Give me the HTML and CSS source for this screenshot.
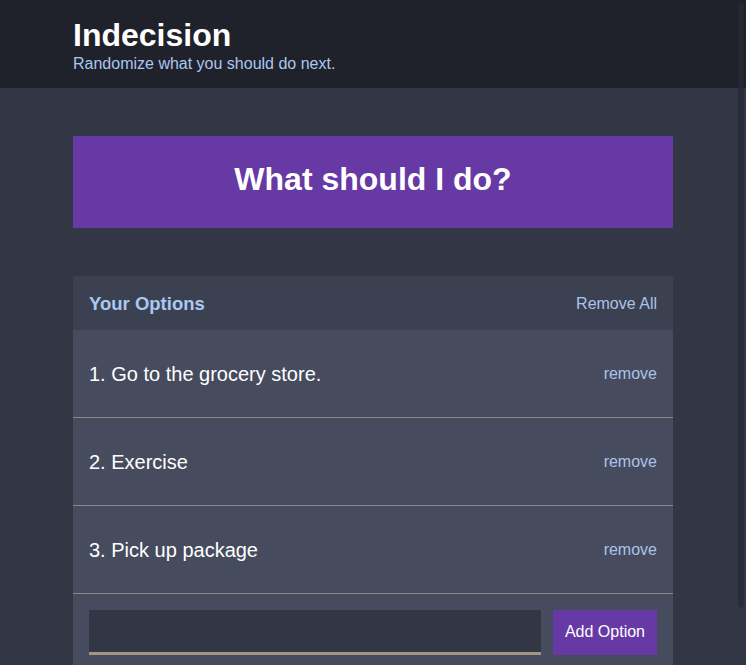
FILE: index.html
```html
<!DOCTYPE html>
<html lang="en">
<head>
<meta charset="utf-8">
<title>Indecision</title>
<link rel="stylesheet" href="styles.css">
</head>
<body>
<header class="header">
  <div class="container">
    <h1 class="header__title">Indecision</h1>
    <h2 class="header__subtitle">Randomize what you should do next.</h2>
  </div>
</header>
<main class="container">
  <button class="big-button">What should I do?</button>
  <section class="widget">
    <div class="widget-header">
      <h3 class="widget-header__title">Your Options</h3>
      <button class="button-link">Remove All</button>
    </div>
    <div class="option">
      <p class="option__text">1. Go to the grocery store.</p>
      <button class="button-link">remove</button>
    </div>
    <div class="option">
      <p class="option__text">2. Exercise</p>
      <button class="button-link">remove</button>
    </div>
    <div class="option">
      <p class="option__text">3. Pick up package</p>
      <button class="button-link">remove</button>
    </div>
    <form class="add-option">
      <input class="add-option__input" type="text" name="option">
      <button class="button" type="button">Add Option</button>
    </form>
  </section>
</main>
<div class="scroll-thumb"></div>
</body>
</html>
```
FILE: styles.css
```css
html {
  overflow: hidden;
}

body {
  margin: 0;
  background: #333745;
  font-family: "Liberation Sans", Arial, Helvetica, sans-serif;
  font-size: 16px;
  color: #ffffff;
}

.container {
  max-width: 600px;
  margin: 0 auto;
}

.header {
  background: #20222b;
  padding: 19px 0 14px;
  margin-bottom: 48px;
}

.header__title {
  margin: 0;
  font-size: 32px;
  line-height: 32px;
  font-weight: bold;
  color: #ffffff;
}

.header__subtitle {
  margin: 3px 0 0;
  font-size: 16px;
  line-height: 20px;
  font-weight: normal;
  color: #a9c7ef;
}

.big-button {
  display: block;
  width: 100%;
  height: 92px;
  margin: 0 0 48px;
  padding: 0 0 5px;
  border: none;
  background: #6639a4;
  color: #ffffff;
  font-family: inherit;
  font-size: 32px;
  font-weight: bold;
}

.widget {
  background: #464b5e;
}

.widget-header {
  display: flex;
  justify-content: space-between;
  align-items: center;
  box-sizing: border-box;
  height: 54px;
  padding: 1px 16px 0;
  background: #3c4151;
}

.widget-header__title {
  margin: 0;
  font-size: 18.5px;
  font-weight: bold;
  color: #a9c9f2;
}

.button-link {
  background: none;
  border: none;
  padding: 0;
  font-family: inherit;
  font-size: 16px;
  color: #abc3e6;
}

.option {
  display: flex;
  justify-content: space-between;
  align-items: center;
  box-sizing: border-box;
  height: 88px;
  padding: 1px 16px 0;
  border-bottom: 1px solid #8b8884;
}

.option__text {
  margin: 0;
  font-size: 20px;
  color: #ffffff;
}

.add-option {
  display: flex;
  gap: 12px;
  padding: 16px;
}

.add-option__input {
  flex: 1;
  height: 42px;
  margin: 0;
  padding: 0 12px;
  border: none;
  border-bottom: 3px solid #a39580;
  background: #333745;
  color: #ffffff;
  font-family: inherit;
  font-size: 16px;
}

.button {
  height: 45px;
  padding: 0 12px 1px;
  border: none;
  background: #6639a4;
  color: #ffffff;
  font-family: inherit;
  font-size: 16px;
}

.scroll-thumb {
  position: fixed;
  top: 3px;
  right: 2px;
  width: 6px;
  height: 605px;
  border-radius: 3px;
  background: rgba(40, 42, 53, 0.75);
}
```
